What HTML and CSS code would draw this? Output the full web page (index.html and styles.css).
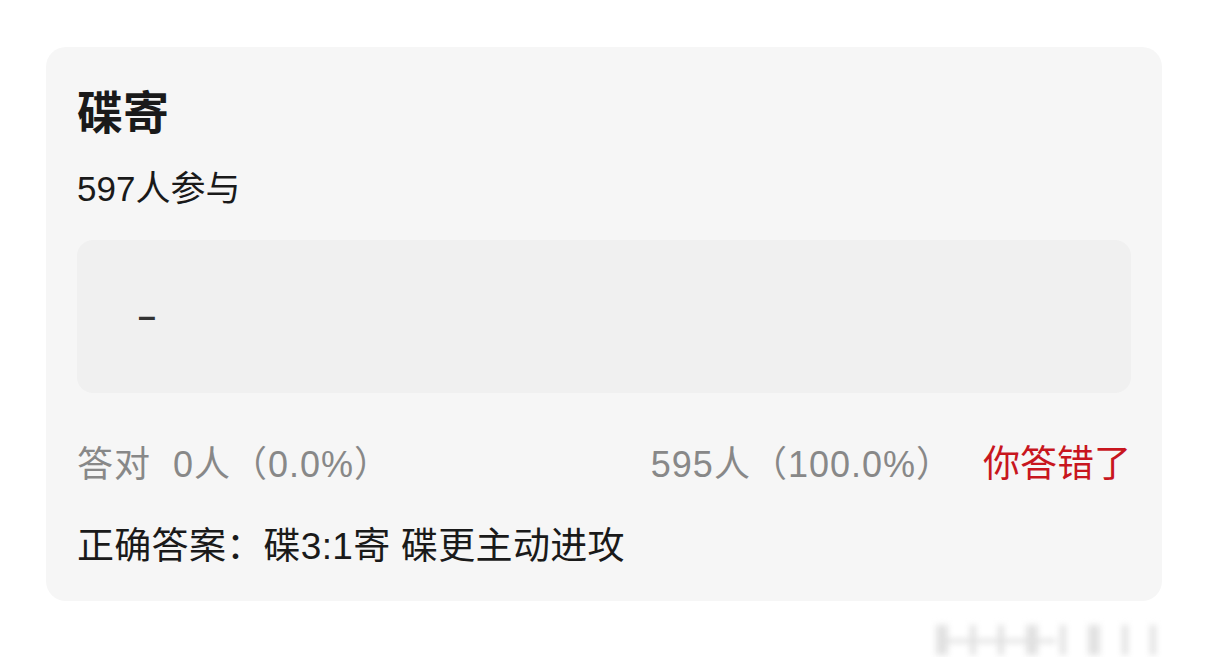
FILE: index.html
```html
<!DOCTYPE html>
<html>
<head>
    <title>竞猜结果</title>
    <link rel="stylesheet" href="styles.css">
</head>
<body>
    <div class="card">
        <h1 class="title">碟寄</h1>
        <div class="count">597人参与</div>

        <div class="choice">
            <span class="dash">–</span>
        </div>

        <div class="stats">
            <span class="right-count">答对&nbsp;&nbsp;0人（0.0%）</span>
            <span class="wrong-count">595人（100.0%）</span>
            <span class="verdict">你答错了</span>
        </div>

        <div class="answer">正确答案：碟3:1寄 碟更主动进攻</div>
    </div>

    <!-- blurred watermark strip under the card -->
    <div class="mark">
        <span class="mark-line"></span>
        <span class="bar wide"></span>
        <span class="bar"></span>
        <span class="bar"></span>
        <span class="bar wide"></span>
        <span class="bar"></span>
        <span class="bar wide"></span>
        <span class="bar"></span>
        <span class="bar"></span>
    </div>
</body>
</html>
```

FILE: styles.css
```css
body {
    margin: 0;
    background: #ffffff;
    font-family: "Liberation Sans", "Noto Sans CJK SC", sans-serif;
    color: #1a1a1a;
}

.card {
    width: 1116px;
    margin: 47px 0 0 46px;
    padding: 34px 31px 31px 31px;
    box-sizing: border-box;
    background: #f6f6f6;
    border-radius: 20px;
}

.title {
    margin: 0;
    font-size: 46px;
    font-weight: 700;
    line-height: 64px;
}

.count {
    margin-top: 22px;
    font-size: 35px;
    line-height: 44px;
}

.choice {
    margin-top: 29px;
    height: 153px;
    display: flex;
    align-items: center;
    padding-left: 61px;
    background: #f0f0f0;
    border-radius: 16px;
}

.dash {
    font-size: 32px;
    font-weight: 700;
    color: #333;
}

.stats {
    margin-top: 49px;
    display: flex;
    align-items: center;
    font-size: 36px;
    line-height: 46px;
    letter-spacing: 1px;
    color: #888;
}

.right-count {
    flex: 1;
}

.verdict {
    margin-left: 30px;
    color: #c8161e;
    font-size: 37px;
    letter-spacing: 0;
}

.answer {
    margin-top: 36px;
    font-size: 37px;
    line-height: 46px;
    letter-spacing: 0.3px;
}

.mark {
    position: relative;
    display: flex;
    align-items: center;
    gap: 22px;
    height: 34px;
    margin: 22px 0 0 936px;
    filter: blur(3px);
}

.mark-line {
    position: absolute;
    left: 0;
    top: 16px;
    width: 120px;
    height: 4px;
    background: #e0e0e0;
}

.bar {
    width: 6px;
    height: 30px;
    background: #e2e2e2;
}

.bar.wide {
    width: 12px;
}
```
